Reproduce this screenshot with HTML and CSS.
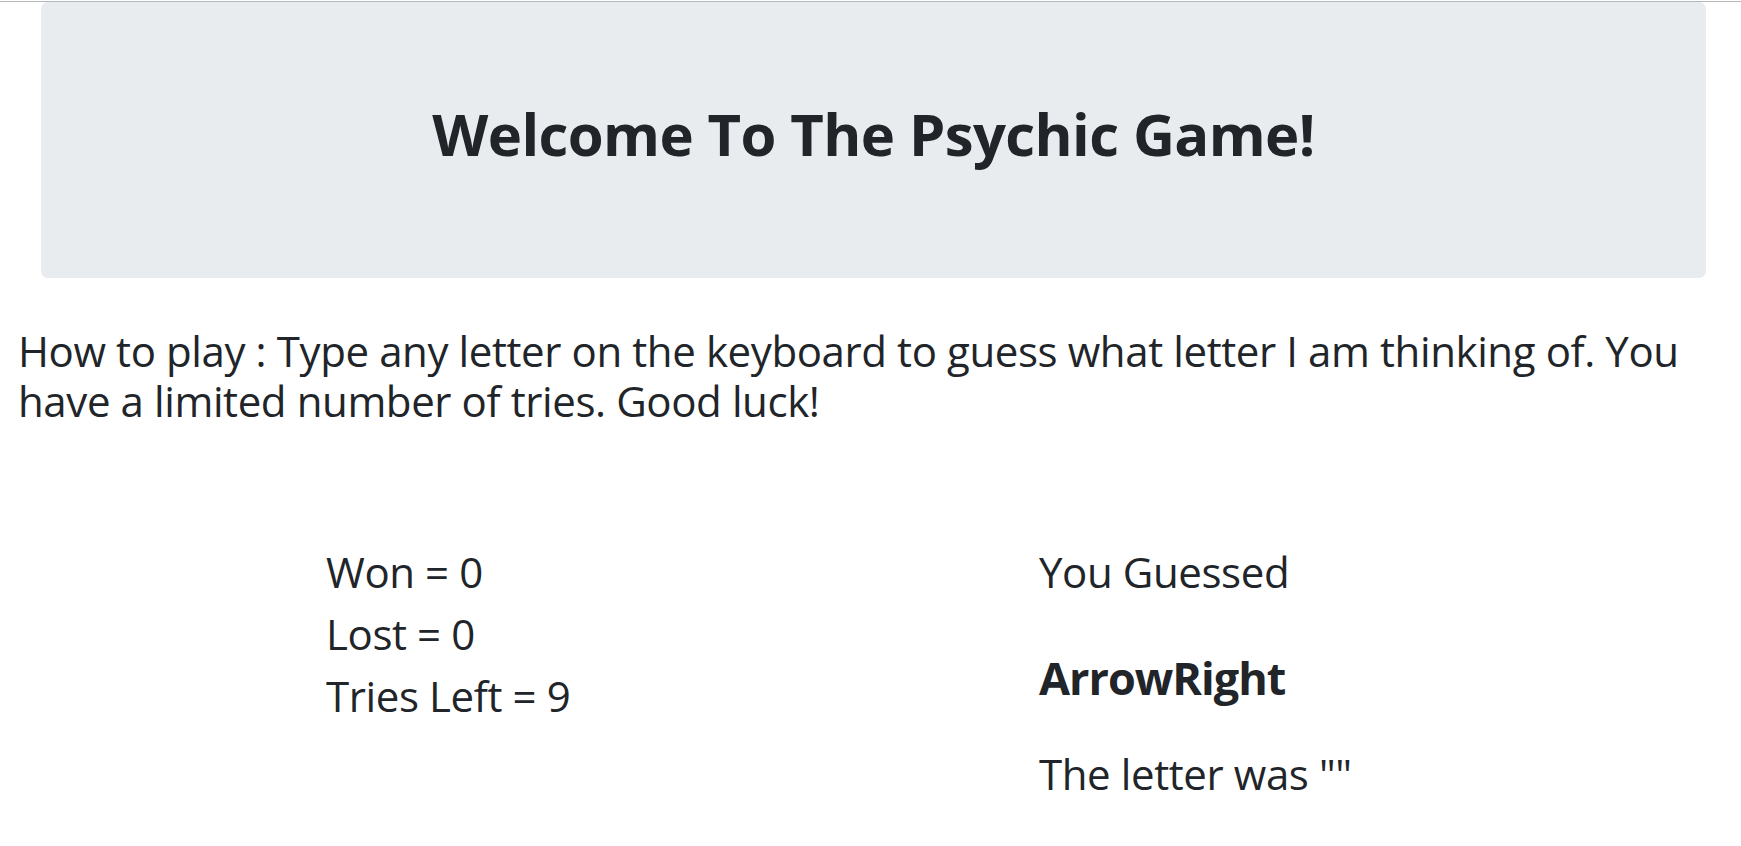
FILE: index.html
```html
<!DOCTYPE html>
<html lang="en">
<head>
<meta charset="utf-8">
<title>Psychic Game</title>
<link rel="stylesheet" href="styles.css">
</head>
<body>
<div class="topline"></div>
<div class="page">
  <div class="jumbotron">
    <h1 class="title">Welcome To The Psychic Game!</h1>
  </div>
  <h3 class="howto">How to play : Type any letter on the keyboard to guess what letter I am thinking of. You have a limited number of tries. Good luck!</h3>
  <div class="stats">
    <div class="col-left">
      <h3 class="stat">Won = 0</h3>
      <h3 class="stat">Lost = 0</h3>
      <h3 class="stat">Tries Left = 9</h3>
    </div>
    <div class="col-right">
      <h3 class="stat">You Guessed</h3>
      <h2 class="guess">ArrowRight</h2>
      <h3 class="stat">The letter was ""</h3>
    </div>
  </div>
</div>
</body>
</html>
```
FILE: styles.css
```css
html, body {
  margin: 0;
  padding: 0;
  background: #ffffff;
}
body {
  font-family: "Open Sans", "Noto Sans", "Liberation Sans", sans-serif;
  color: #212529;
}
.topline {
  height: 1px;
  margin-top: 1px;
  background: #b4b6b8;
}
.page {
  padding: 0 35px 0 0;
}
.jumbotron {
  margin: 0 0 48px 41px;
  background: #e9ecef;
  border-radius: 7px;
  padding: 96px 30px 108px;
  text-align: center;
}
.title {
  margin: 0;
  font-size: 58px;
  line-height: 72px;
  font-weight: 700;
  letter-spacing: -0.6px;
}
.howto {
  margin: 0 0 12px;
  padding-left: 18px;
  font-size: 42px;
  line-height: 50px;
  font-weight: 500;
  letter-spacing: -0.4px;
}
.stats {
  display: flex;
  margin-top: 121px;
  padding-left: 326px;
}
.col-left {
  width: 713px;
}
.col-right {
  flex: 1;
}
.stat {
  margin: 0 0 12px;
  font-size: 42px;
  line-height: 50px;
  font-weight: 500;
  letter-spacing: -0.4px;
}
.guess {
  margin: 52px 0 42px;
  font-size: 45px;
  line-height: 58px;
  font-weight: 700;
  letter-spacing: -1px;
}
```
